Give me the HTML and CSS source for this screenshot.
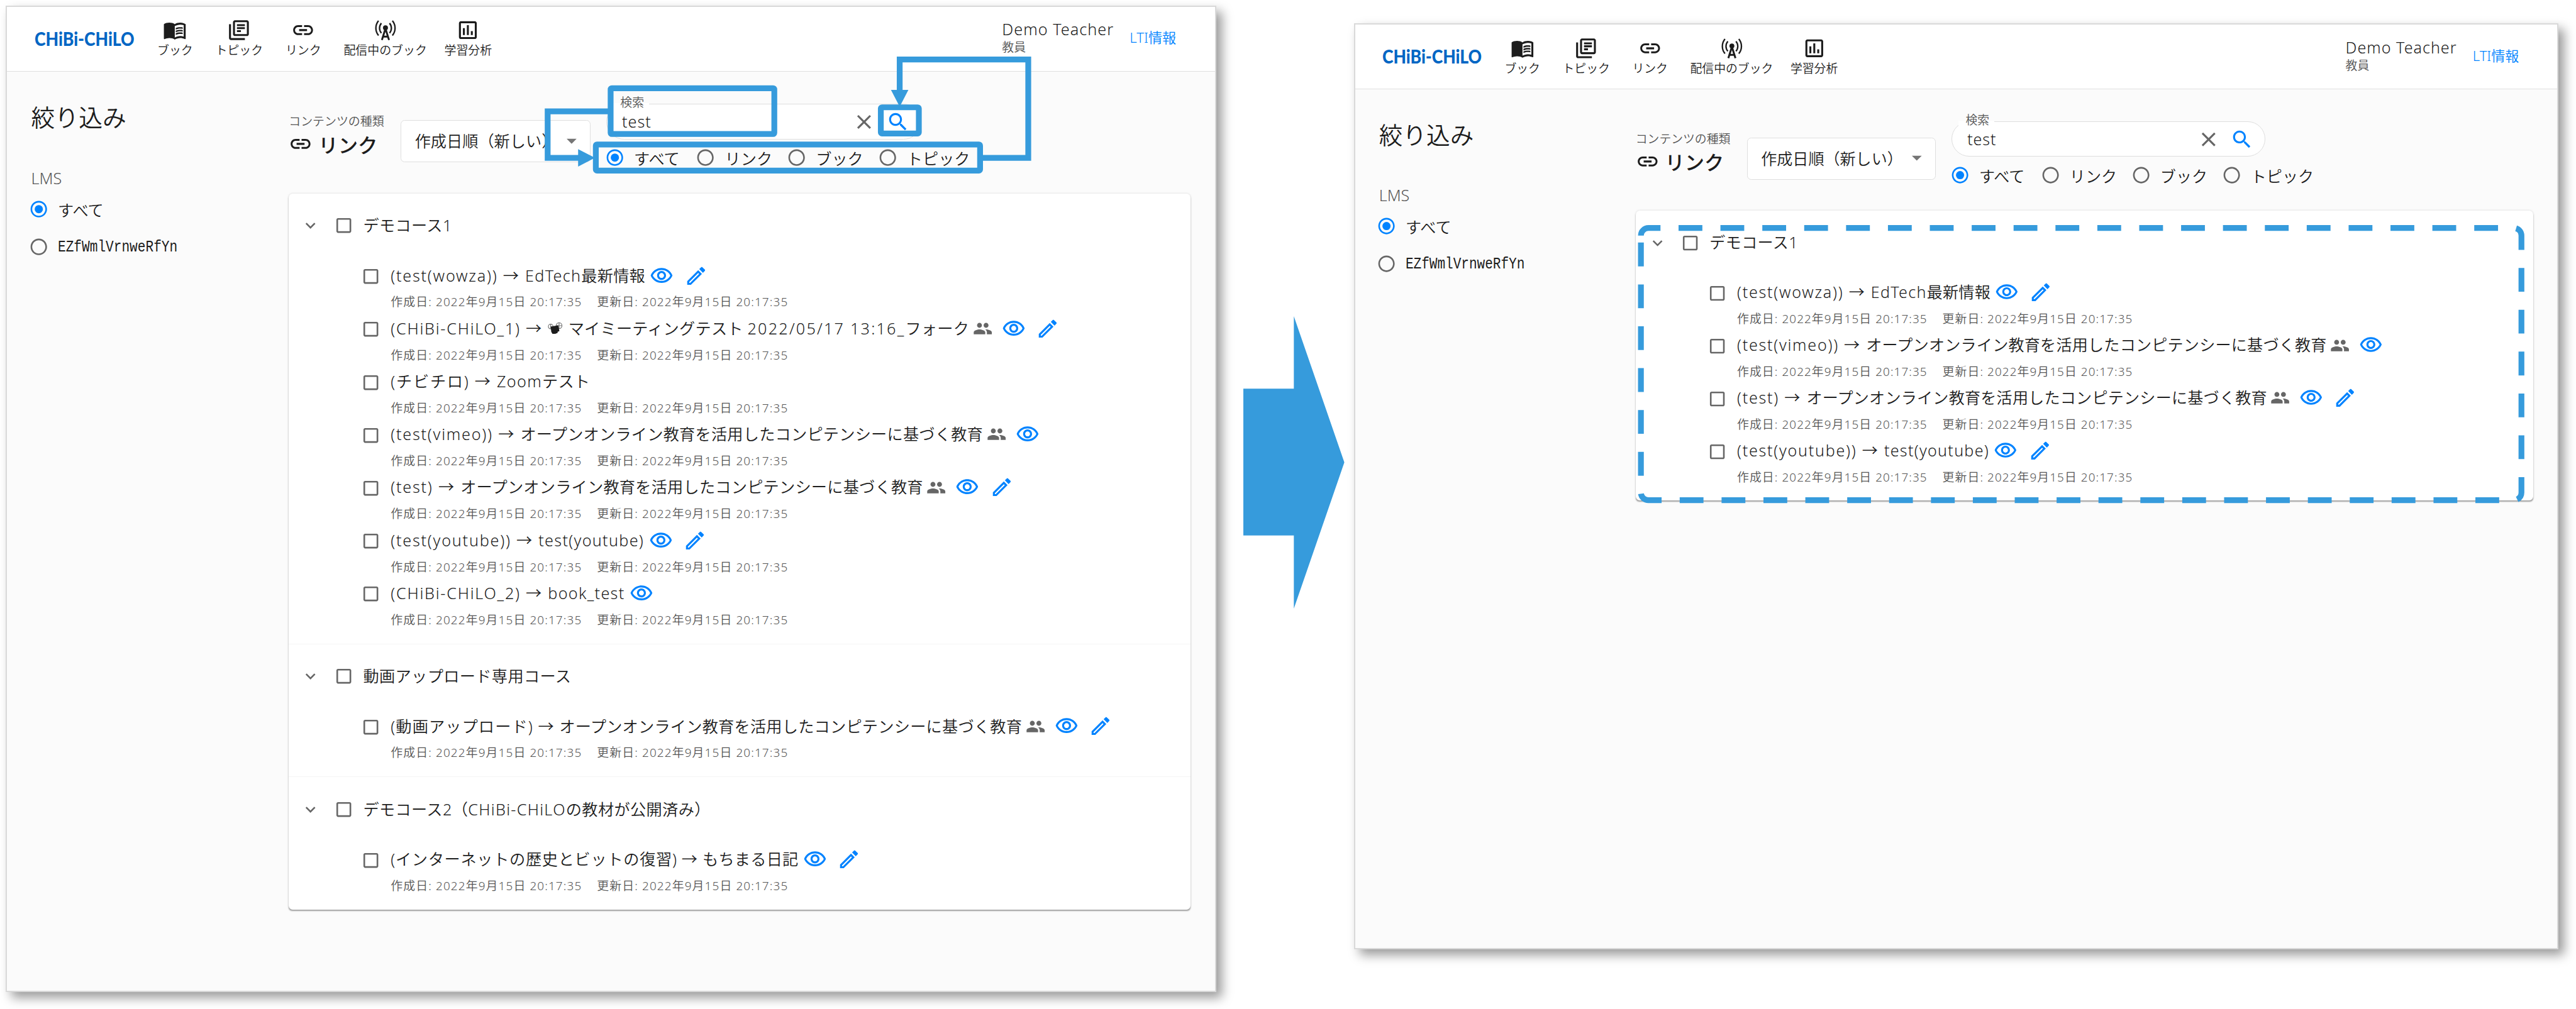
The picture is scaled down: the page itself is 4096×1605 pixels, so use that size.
FILE: index.html
```html
<!DOCTYPE html>
<html lang="ja">
<head>
<meta charset="utf-8">
<title>CHiBi-CHiLO リンク検索</title>
<link rel="stylesheet" href="styles.css">
</head>
<body>
<svg class="defs" width="0" height="0" aria-hidden="true">
  <symbol id="book" viewBox="0 0 24 24"><path d="M21 5c-1.11-.35-2.33-.5-3.5-.5-1.95 0-4.05.4-5.5 1.5-1.45-1.1-3.55-1.5-5.5-1.5S2.45 4.9 1 6v14.65c0 .25.25.5.5.5.1 0 .15-.05.25-.05C3.1 20.45 5.05 20 6.5 20c1.95 0 4.05.4 5.5 1.5 1.35-.85 3.8-1.5 5.5-1.5 1.65 0 3.35.3 4.75 1.05.1.05.15.05.25.05.25 0 .5-.25.5-.5V6c-.6-.45-1.25-.75-2-1zm0 13.5c-1.1-.35-2.3-.5-3.5-.5-1.7 0-4.15.65-5.5 1.5V8c1.35-.85 3.8-1.5 5.5-1.5 1.2 0 2.4.15 3.5.5v11.5z"/><path d="M17.5 10.5c.88 0 1.73.09 2.5.26V9.24c-.79-.15-1.64-.24-2.5-.24-1.7 0-3.24.29-4.5.83v1.66c1.13-.64 2.7-.99 4.5-.99zM13 12.49v1.66c1.13-.64 2.7-.99 4.5-.99.88 0 1.73.09 2.5.26V11.9c-.79-.15-1.64-.24-2.5-.24-1.7 0-3.24.3-4.5.83zM17.5 14.33c-1.7 0-3.24.29-4.5.83v1.66c1.13-.64 2.7-.99 4.5-.99.88 0 1.73.09 2.5.26v-1.52c-.79-.16-1.64-.24-2.5-.24z"/></symbol>
  <symbol id="topic" viewBox="0 0 24 24"><path d="M4 6H2v14c0 1.1.9 2 2 2h14v-2H4V6zm16-4H8c-1.1 0-2 .9-2 2v12c0 1.1.9 2 2 2h12c1.1 0 2-.9 2-2V4c0-1.1-.9-2-2-2zm0 14H8V4h12v12zM10 9h8v2h-8zm0 3h4v2h-4zm0-6h8v2h-8z"/></symbol>
  <symbol id="link" viewBox="0 0 24 24"><path d="M3.9 12c0-1.71 1.39-3.1 3.1-3.1h4V7H7c-2.76 0-5 2.24-5 5s2.24 5 5 5h4v-1.9H7c-1.71 0-3.1-1.39-3.1-3.1zM8 13h8v-2H8v2zm9-6h-4v1.9h4c1.71 0 3.1 1.39 3.1 3.1s-1.39 3.1-3.1 3.1h-4V17h4c2.76 0 5-2.24 5-5s-2.24-5-5-5z"/></symbol>
  <symbol id="tower" viewBox="0 0 24 24"><g fill="none" stroke="currentColor" stroke-width="1.5"><path d="M5 2.6a11.6 11.6 0 0 0 0 14.8M19 2.6a11.6 11.6 0 0 1 0 14.8M7.9 5a7.6 7.6 0 0 0 0 10M16.1 5a7.6 7.6 0 0 1 0 10"/><path stroke-width="1.9" d="M8.4 22 12 10.5 15.6 22M9.6 18.6h4.8"/></g><circle cx="12" cy="9.6" r="2.5"/></symbol>
  <symbol id="chart" viewBox="0 0 24 24"><path d="M9 17H7v-7h2v7zm4 0h-2V7h2v10zm4 0h-2v-4h2v4zm2 2H5V5h14v14zm0-16H5c-1.1 0-2 .9-2 2v14c0 1.1.9 2 2 2h14c1.1 0 2-.9 2-2V5c0-1.1-.9-2-2-2z"/></symbol>
  <symbol id="close" viewBox="0 0 24 24"><path d="M19 6.41 17.59 5 12 10.59 6.41 5 5 6.41 10.59 12 5 17.59 6.41 19 12 13.41 17.59 19 19 17.59 13.41 12z"/></symbol>
  <symbol id="search" viewBox="0 0 24 24"><path d="M15.5 14h-.79l-.28-.27C15.41 12.59 16 11.11 16 9.5 16 5.91 13.09 3 9.5 3S3 5.91 3 9.5 5.91 16 9.5 16c1.61 0 3.09-.59 4.23-1.57l.27.28v.79l5 4.99L20.49 19l-4.99-5zm-6 0C7.01 14 5 11.99 5 9.5S7.01 5 9.5 5 14 7.01 14 9.5 11.99 14 9.5 14z"/></symbol>
  <symbol id="drop" viewBox="0 0 24 24"><path d="m7 10 5 5 5-5z"/></symbol>
  <symbol id="chevron" viewBox="0 0 24 24"><path d="M16.59 8.59 12 13.17 7.41 8.59 6 10l6 6 6-6z"/></symbol>
  <symbol id="box" viewBox="0 0 24 24"><path d="M19 5v14H5V5h14m0-2H5c-1.1 0-2 .9-2 2v14c0 1.1.9 2 2 2h14c1.1 0 2-.9 2-2V5c0-1.1-.9-2-2-2z"/></symbol>
  <symbol id="radio" viewBox="0 0 24 24"><path d="M12 2C6.48 2 2 6.48 2 12s4.48 10 10 10 10-4.48 10-10S17.52 2 12 2zm0 18c-4.42 0-8-3.58-8-8s3.58-8 8-8 8 3.58 8 8-3.58 8-8 8z"/></symbol>
  <symbol id="radio-on" viewBox="0 0 24 24"><path d="M12 2C6.48 2 2 6.48 2 12s4.48 10 10 10 10-4.48 10-10S17.52 2 12 2zm0 18c-4.42 0-8-3.58-8-8s3.58-8 8-8 8 3.58 8 8-3.58 8-8 8z"/><circle cx="12" cy="12" r="5"/></symbol>
  <symbol id="eye" viewBox="0 0 24 24"><path d="M12 6c3.79 0 7.17 2.13 8.82 5.5C19.17 14.87 15.79 17 12 17s-7.17-2.13-8.82-5.5C4.83 8.13 8.21 6 12 6m0-2C7 4 2.73 7.11 1 11.5 2.73 15.89 7 19 12 19s9.27-3.11 11-7.5C21.27 7.11 17 4 12 4zm0 5c1.38 0 2.5 1.12 2.5 2.5S13.38 14 12 14s-2.5-1.12-2.5-2.5S10.62 9 12 9m0-2c-2.48 0-4.5 2.02-4.5 4.5S9.52 16 12 16s4.5-2.02 4.5-4.5S14.48 7 12 7z"/></symbol>
  <symbol id="edit" viewBox="0 0 24 24"><path d="m14.06 9.02.92.92L5.92 19H5v-.92l9.06-9.06M17.66 3c-.25 0-.51.1-.7.29l-1.83 1.83 3.75 3.75 1.83-1.83c.39-.39.39-1.02 0-1.41l-2.34-2.34c-.2-.2-.45-.29-.71-.29zm-3.6 3.19L3 17.25V21h3.75L17.81 9.94l-3.75-3.75z"/></symbol>
  <symbol id="people" viewBox="0 0 24 24"><path d="M16 11c1.66 0 2.99-1.34 2.99-3S17.66 5 16 5c-1.66 0-3 1.34-3 3s1.34 3 3 3zm-8 0c1.66 0 2.99-1.34 2.99-3S9.66 5 8 5C6.34 5 5 6.34 5 8s1.34 3 3 3zm0 2c-2.33 0-7 1.17-7 3.5V19h14v-2.5c0-2.33-4.67-3.5-7-3.5zm8 0c-.29 0-.62.02-.97.05 1.16.84 1.97 1.97 1.97 3.45V19h6v-2.5c0-2.33-4.67-3.5-7-3.5z"/></symbol>
  <symbol id="camera" viewBox="0 0 26 22"><g fill="#fff" stroke="#777" stroke-width="1.3"><circle cx="5" cy="8" r="4"/><circle cx="19.5" cy="6.5" r="5"/><path d="M19.5 1.5v10M14.5 6.5h10M5 4v8"/></g><path fill="#1c1c1c" d="M5 8l13-2 1 4 1 6-3 1v2l-4 1.500H8L6 17z"/></symbol>
</svg>

<main class="stage">
  <section class="window window-before">
    <header class="appbar">
      <svg class="logo" viewBox="0 0 172 40"><text x="0" y="31" textLength="172" lengthAdjust="spacingAndGlyphs">CHiBi-CHiLO</text></svg>
      <nav class="nav">
        <a class="nav-item"><svg class="icon"><use href="#book"/></svg>ブック</a>
        <a class="nav-item"><svg class="icon"><use href="#topic"/></svg>トピック</a>
        <a class="nav-item"><svg class="icon"><use href="#link"/></svg>リンク</a>
        <a class="nav-item"><svg class="icon"><use href="#tower"/></svg>配信中のブック</a>
        <a class="nav-item"><svg class="icon"><use href="#chart"/></svg>学習分析</a>
      </nav>
      <div class="user"><span class="user-name">Demo Teacher</span><span class="user-role">教員</span></div>
      <a class="lti">LTI情報</a>
    </header>
    <div class="body">
      <aside class="sidebar">
        <h2 class="side-title">絞り込み</h2>
        <p class="side-label">LMS</p>
        <label class="side-radio"><svg class="icon-s on"><use href="#radio-on"/></svg>すべて</label>
        <label class="side-radio"><svg class="icon-s"><use href="#radio"/></svg><span class="mono">EZfWmlVrnweRfYn</span></label>
      </aside>
      <div class="content">
        <div class="toolbar">
          <div class="kind"><span class="kind-label">コンテンツの種類</span><span class="kind-value"><svg class="icon"><use href="#link"/></svg>リンク</span></div>
          <div class="select">作成日順（新しい）<svg class="icon"><use href="#drop"/></svg></div>
          <div class="search">
            <div class="search-box"><span class="search-label">検索</span><span class="search-text">test</span><svg class="icon"><use href="#close"/></svg><svg class="icon on"><use href="#search"/></svg></div>
            <div class="targets">
              <label><svg class="icon-s on"><use href="#radio-on"/></svg>すべて</label>
              <label><svg class="icon-s"><use href="#radio"/></svg>リンク</label>
              <label><svg class="icon-s"><use href="#radio"/></svg>ブック</label>
              <label><svg class="icon-s"><use href="#radio"/></svg>トピック</label>
            </div>
          </div>
        </div>
        <div class="card">
          <section class="course">
            <h3 class="course-head"><svg class="icon-s"><use href="#chevron"/></svg><svg class="icon-s"><use href="#box"/></svg><span>デモコース1</span></h3>
            <article class="item"><svg class="icon-s"><use href="#box"/></svg><div><p class="title"><span><span class="latin">(test(wowza)) → </span><span class="word">EdTech</span>最新情報</span><svg class="icon eye"><use href="#eye"/></svg><svg class="icon edit"><use href="#edit"/></svg></p><p class="dates"><span>作成日: 2022年9月15日 20:17:35</span><span>更新日: 2022年9月15日 20:17:35</span></p></div></article>
            <article class="item"><svg class="icon-s"><use href="#box"/></svg><div><p class="title"><span><span class="latin">(CHiBi-CHiLO_1) → </span><svg class="camera"><use href="#camera"/></svg><span class="latin"> </span>マイミーティングテスト <span class="number">2022/05/17 13:16_</span>フォーク</span><svg class="icon-s people"><use href="#people"/></svg><svg class="icon eye"><use href="#eye"/></svg><svg class="icon edit"><use href="#edit"/></svg></p><p class="dates"><span>作成日: 2022年9月15日 20:17:35</span><span>更新日: 2022年9月15日 20:17:35</span></p></div></article>
            <article class="item"><svg class="icon-s"><use href="#box"/></svg><div><p class="title"><span><span class="latin">(チビチロ) → </span><span class="word">Zoom</span>テスト</span></p><p class="dates"><span>作成日: 2022年9月15日 20:17:35</span><span>更新日: 2022年9月15日 20:17:35</span></p></div></article>
            <article class="item"><svg class="icon-s"><use href="#box"/></svg><div><p class="title"><span><span class="latin">(test(vimeo)) → </span>オープンオンライン教育を活用したコンピテンシーに基づく教育</span><svg class="icon-s people"><use href="#people"/></svg><svg class="icon eye"><use href="#eye"/></svg></p><p class="dates"><span>作成日: 2022年9月15日 20:17:35</span><span>更新日: 2022年9月15日 20:17:35</span></p></div></article>
            <article class="item"><svg class="icon-s"><use href="#box"/></svg><div><p class="title"><span><span class="latin">(test) → </span>オープンオンライン教育を活用したコンピテンシーに基づく教育</span><svg class="icon-s people"><use href="#people"/></svg><svg class="icon eye"><use href="#eye"/></svg><svg class="icon edit"><use href="#edit"/></svg></p><p class="dates"><span>作成日: 2022年9月15日 20:17:35</span><span>更新日: 2022年9月15日 20:17:35</span></p></div></article>
            <article class="item"><svg class="icon-s"><use href="#box"/></svg><div><p class="title"><span><span class="latin">(test(youtube)) → </span><span class="word">test(youtube)</span></span><svg class="icon eye"><use href="#eye"/></svg><svg class="icon edit"><use href="#edit"/></svg></p><p class="dates"><span>作成日: 2022年9月15日 20:17:35</span><span>更新日: 2022年9月15日 20:17:35</span></p></div></article>
            <article class="item"><svg class="icon-s"><use href="#box"/></svg><div><p class="title"><span><span class="latin">(CHiBi-CHiLO_2) → </span><span class="word">book_test</span></span><svg class="icon eye"><use href="#eye"/></svg></p><p class="dates"><span>作成日: 2022年9月15日 20:17:35</span><span>更新日: 2022年9月15日 20:17:35</span></p></div></article>
          </section>
          <section class="course">
            <h3 class="course-head"><svg class="icon-s"><use href="#chevron"/></svg><svg class="icon-s"><use href="#box"/></svg><span>動画アップロード専用コース</span></h3>
            <article class="item"><svg class="icon-s"><use href="#box"/></svg><div><p class="title"><span><span class="kana">(動画アップロード) → </span>オープンオンライン教育を活用したコンピテンシーに基づく教育</span><svg class="icon-s people"><use href="#people"/></svg><svg class="icon eye"><use href="#eye"/></svg><svg class="icon edit"><use href="#edit"/></svg></p><p class="dates"><span>作成日: 2022年9月15日 20:17:35</span><span>更新日: 2022年9月15日 20:17:35</span></p></div></article>
          </section>
          <section class="course">
            <h3 class="course-head"><svg class="icon-s"><use href="#chevron"/></svg><svg class="icon-s"><use href="#box"/></svg><span>デモコース2（<b class="word">CHiBi-CHiLO</b>の教材が公開済み）</span></h3>
            <article class="item"><svg class="icon-s"><use href="#box"/></svg><div><p class="title"><span><span class="kana-tight">(インターネットの歴史とビットの復習) → </span>もちまる日記</span><svg class="icon eye"><use href="#eye"/></svg><svg class="icon edit"><use href="#edit"/></svg></p><p class="dates"><span>作成日: 2022年9月15日 20:17:35</span><span>更新日: 2022年9月15日 20:17:35</span></p></div></article>
          </section>
        </div>
      </div>
    </div>
  </section>

  <svg class="big-arrow" viewBox="0 0 174 504"><path d="M0 125H87V0L174 252 87 504V378H0z"/></svg>

  <section class="window window-after">
    <header class="appbar">
      <svg class="logo" viewBox="0 0 172 40"><text x="0" y="31" textLength="172" lengthAdjust="spacingAndGlyphs">CHiBi-CHiLO</text></svg>
      <nav class="nav">
        <a class="nav-item"><svg class="icon"><use href="#book"/></svg>ブック</a>
        <a class="nav-item"><svg class="icon"><use href="#topic"/></svg>トピック</a>
        <a class="nav-item"><svg class="icon"><use href="#link"/></svg>リンク</a>
        <a class="nav-item"><svg class="icon"><use href="#tower"/></svg>配信中のブック</a>
        <a class="nav-item"><svg class="icon"><use href="#chart"/></svg>学習分析</a>
      </nav>
      <div class="user"><span class="user-name">Demo Teacher</span><span class="user-role">教員</span></div>
      <a class="lti">LTI情報</a>
    </header>
    <div class="body">
      <aside class="sidebar">
        <h2 class="side-title">絞り込み</h2>
        <p class="side-label">LMS</p>
        <label class="side-radio"><svg class="icon-s on"><use href="#radio-on"/></svg>すべて</label>
        <label class="side-radio"><svg class="icon-s"><use href="#radio"/></svg><span class="mono">EZfWmlVrnweRfYn</span></label>
      </aside>
      <div class="content">
        <div class="toolbar">
          <div class="kind"><span class="kind-label">コンテンツの種類</span><span class="kind-value"><svg class="icon"><use href="#link"/></svg>リンク</span></div>
          <div class="select">作成日順（新しい）<svg class="icon"><use href="#drop"/></svg></div>
          <div class="search">
            <div class="search-box"><span class="search-label">検索</span><span class="search-text">test</span><svg class="icon"><use href="#close"/></svg><svg class="icon on"><use href="#search"/></svg></div>
            <div class="targets">
              <label><svg class="icon-s on"><use href="#radio-on"/></svg>すべて</label>
              <label><svg class="icon-s"><use href="#radio"/></svg>リンク</label>
              <label><svg class="icon-s"><use href="#radio"/></svg>ブック</label>
              <label><svg class="icon-s"><use href="#radio"/></svg>トピック</label>
            </div>
          </div>
        </div>
        <div class="card">
          <section class="course">
            <h3 class="course-head"><svg class="icon-s"><use href="#chevron"/></svg><svg class="icon-s"><use href="#box"/></svg><span>デモコース1</span></h3>
            <article class="item"><svg class="icon-s"><use href="#box"/></svg><div><p class="title"><span><span class="latin">(test(wowza)) → </span><span class="word">EdTech</span>最新情報</span><svg class="icon eye"><use href="#eye"/></svg><svg class="icon edit"><use href="#edit"/></svg></p><p class="dates"><span>作成日: 2022年9月15日 20:17:35</span><span>更新日: 2022年9月15日 20:17:35</span></p></div></article>
            <article class="item"><svg class="icon-s"><use href="#box"/></svg><div><p class="title"><span><span class="latin">(test(vimeo)) → </span>オープンオンライン教育を活用したコンピテンシーに基づく教育</span><svg class="icon-s people"><use href="#people"/></svg><svg class="icon eye"><use href="#eye"/></svg></p><p class="dates"><span>作成日: 2022年9月15日 20:17:35</span><span>更新日: 2022年9月15日 20:17:35</span></p></div></article>
            <article class="item"><svg class="icon-s"><use href="#box"/></svg><div><p class="title"><span><span class="latin">(test) → </span>オープンオンライン教育を活用したコンピテンシーに基づく教育</span><svg class="icon-s people"><use href="#people"/></svg><svg class="icon eye"><use href="#eye"/></svg><svg class="icon edit"><use href="#edit"/></svg></p><p class="dates"><span>作成日: 2022年9月15日 20:17:35</span><span>更新日: 2022年9月15日 20:17:35</span></p></div></article>
            <article class="item"><svg class="icon-s"><use href="#box"/></svg><div><p class="title"><span><span class="latin">(test(youtube)) → </span><span class="word">test(youtube)</span></span><svg class="icon eye"><use href="#eye"/></svg><svg class="icon edit"><use href="#edit"/></svg></p><p class="dates"><span>作成日: 2022年9月15日 20:17:35</span><span>更新日: 2022年9月15日 20:17:35</span></p></div></article>
          </section>
        </div>
      </div>
    </div>
  </section>

  <svg class="callouts" viewBox="0 0 4438 1739">
    <g class="callout-line">
      <rect x="1052" y="152" width="282" height="79" rx="2"/>
      <rect x="1517.500" y="185" width="65.500" height="45" rx="2"/>
      <rect x="1026.500" y="249" width="662" height="45" rx="2"/>
      <path d="M1052 192H943.500V272H998"/>
      <path d="M1689 272H1771.500V102.500H1550V157"/>
      <path class="dashed" d="M2827 406A13 13 0 0 1 2840 393H4331A13 13 0 0 1 4344 406V849A13 13 0 0 1 4331 862H2840A13 13 0 0 1 2827 849Z"/>
    </g>
    <path class="callout-head" d="M996 257V287L1025 272ZM1535 155H1565L1550 184Z"/>
  </svg>
</main>
</body>
</html>
```
FILE: styles.css
```css
* { box-sizing: border-box; }

body {
  margin: 0;
  background: #fff;
  color: #1c1c1c;
  font-family: "Noto Sans", "Noto Sans CJK JP", sans-serif;
  font-weight: 350;
  overflow: hidden;
}

h2, h3, p, b { margin: 0; font-weight: inherit; }

svg { display: block; flex: none; fill: currentColor; }
.defs { position: absolute; }

.stage {
  position: relative;
  display: flex;
  align-items: flex-start;
  width: 4438px;
  height: 1739px;
  zoom: 0.92294;
  font-size: 27.3px;
  overflow: hidden;
}

/* Application windows */
.window {
  flex: none;
  width: 2085px;
  background: #fbfbfb;
  border: 2.5px solid #d9d9d9;
  box-shadow: 10px 10px 18px rgba(0, 0, 0, .4);
}
.window-before { height: 1700.5px; margin: 9.500px 0 0 10px; }
.window-after { height: 1603px; margin: 40.800px 0 0 16.500px; zoom: 0.9955; }

.big-arrow {
  width: 174px;
  height: 504px;
  margin: 545px 0 0 47px;
  fill: #369bdc;
}

.icon { width: 41px; height: 41px; }
.icon-s { width: 34px; height: 34px; color: #666; }
.icon-s.on, .icon.on { color: #0083ff; }

/* Header */
.appbar {
  display: flex;
  align-items: flex-start;
  height: 112px;
  padding: 0 61.500px 0 47.500px;
  background: #fff;
  border-bottom: 2px solid #e0e0e0;
}
.logo { width: 172px; height: 40px; margin: 36px 15.500px 0 0; overflow: visible; }
.logo text { font: 900 32px Lato, sans-serif; fill: #0066c4; }
.nav { display: flex; padding-top: 20px; }
.nav-item {
  display: flex;
  flex-direction: column;
  align-items: center;
  min-width: 109px;
  padding: 0 15px;
  font-size: 20.500px;
  line-height: 30px;
}
.user { display: flex; flex-direction: column; margin-left: auto; padding-top: 20px; }
.user-name { line-height: 38px; width: 220px; letter-spacing: 1.100px; }
.user-role { font-size: 20.500px; line-height: 24px; color: #555; }
.lti { width: 85px; padding-top: 35px; font-size: 24px; line-height: 36px; color: #0083ff; white-space: nowrap; }

/* Page body */
.body { display: flex; }
.sidebar { width: 485.500px; padding: 54px 0 0 41.500px; }
.side-title { font-size: 41px; line-height: 50px; }
.side-label { margin: 57px 0 -1px; line-height: 44px; color: #555; }
.side-radio { display: flex; align-items: center; gap: 16px; height: 65.500px; margin-left: -4px; }
.mono {
  font-family: "Liberation Mono", monospace;
  font-size: 28px;
  transform: scaleX(.818);
  transform-origin: left;
}

.content { width: 1553.500px; }
.toolbar { display: flex; align-items: flex-start; height: 210px; }
.kind { width: 193px; padding-top: 72px; }
.kind-label { display: block; font-size: 20.500px; line-height: 28px; color: #555; }
.kind-value { display: flex; align-items: center; gap: 10px; height: 49px; font-size: 34px; font-weight: 500; }
.select {
  display: flex;
  align-items: center;
  justify-content: space-between;
  width: 326.500px;
  height: 73px;
  margin-top: 83px;
  padding: 0 11px 2px 23px;
  background: #fff;
  border: 2px solid #dfdfdf;
  border-radius: 7px;
  white-space: nowrap;
}
.select .icon { color: #757575; }
.search { width: 543px; margin: 55.500px 0 0 27.500px; }
.search-box {
  position: relative;
  display: flex;
  align-items: center;
  height: 61px;
  padding: 0 19px 0 26px;
  background: #fff;
  border: 2px solid #dedede;
  border-radius: 31px;
}
.search-text { flex: 1; letter-spacing: 1px; }
.search-box .icon { color: #666; margin-left: 17px; }
.search-box .icon.on { color: #0083ff; }
.search-label {
  position: absolute;
  left: 11px;
  top: -17px;
  padding: 0 9px 0 12px;
  background: linear-gradient(#fbfbfb 50%, #fff 50%);
  font-size: 20.500px;
  line-height: 28px;
  color: #555;
}
.targets { display: flex; margin: 13px 0 0 -2.500px; width: 680px; }
.targets label { display: flex; align-items: center; gap: 16px; width: 156.700px; height: 38px; white-space: nowrap; }

/* Result list */
.card {
  background: #fff;
  border-radius: 7px;
  box-shadow: 0 3px 2px -1px rgba(0, 0, 0, .3), 0 1px 4px rgba(0, 0, 0, .15);
}
.course { padding-bottom: 26px; }
.course + .course { border-top: 1.500px solid #f4f4f4; }
.course-head {
  display: flex;
  align-items: center;
  height: 111px;
  padding-left: 20.500px;
  font-size: 27.300px;
  letter-spacing: .400px;
}
.course-head span { padding-bottom: 4px; }
.course-head .icon-s + .icon-s { margin: 0 16px 0 23.500px; }
.item { display: flex; height: 91.250px; padding-left: 124px; }
.item > .icon-s { margin: 15px 17.500px 0 0; }
.title { display: flex; align-items: center; height: 41px; margin-top: 10px; letter-spacing: .250px; white-space: pre; }
.title > span { padding-bottom: 4px; }
.latin { letter-spacing: 1.900px; }
.word { letter-spacing: 1.400px; }
.kana { letter-spacing: 1.200px; }
.kana-tight { letter-spacing: .750px; }
.number { letter-spacing: 2.400px; }
.eye { margin-left: 8px; color: #0083ff; }
.people { margin-left: 6px; }
.people + .eye { margin-left: 16px; }
.edit { margin-left: 18px; color: #0083ff; }
.camera { display: inline-block; width: 26px; height: 22px; }
.dates { display: flex; gap: 26px; margin-top: 12px; font-size: 20.500px; line-height: 28px; letter-spacing: 1.200px; color: #555; white-space: nowrap; }

/* Annotations drawn over both windows */
.callouts { position: absolute; left: 0; top: 0; width: 4438px; height: 1739px; }
.callout-line { fill: none; stroke: #369bdc; stroke-width: 10; }
.callout-head { fill: #369bdc; }
.dashed { stroke-dasharray: 41 31.150; }
```
